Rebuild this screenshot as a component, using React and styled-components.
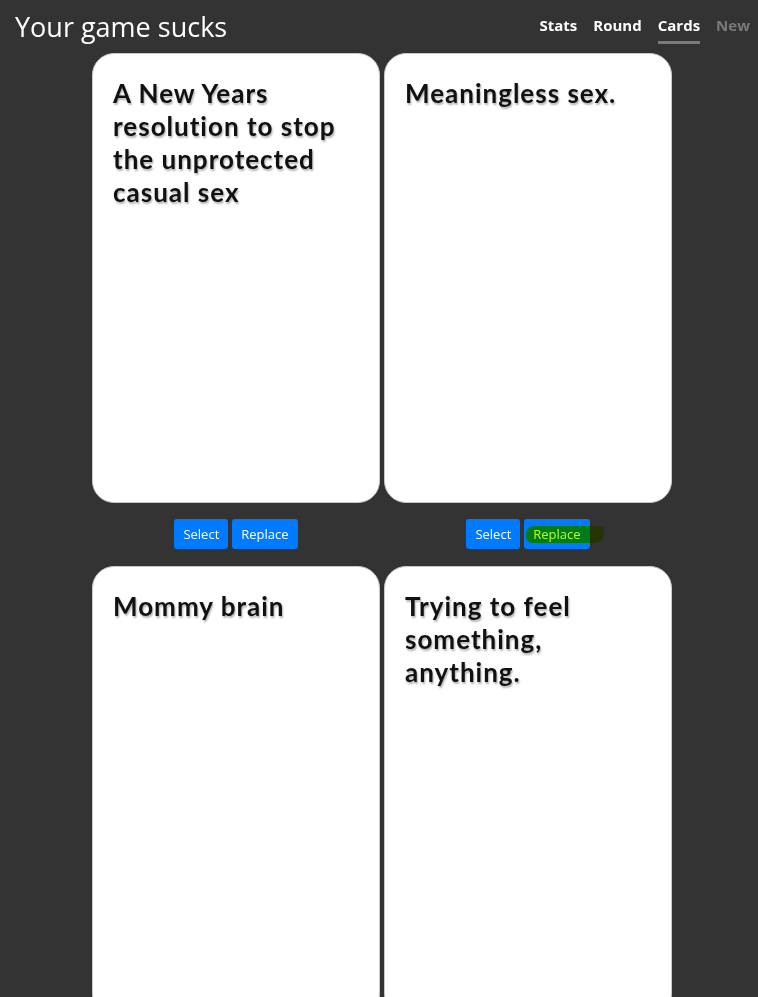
import React from "react";
import styled, { createGlobalStyle } from "styled-components";

const GlobalStyle = createGlobalStyle`
  html, body {
    margin: 0;
    padding: 0;
    background: #333333;
    overflow: hidden;
  }
  body {
    font-family: "Open Sans", "Noto Sans", sans-serif;
  }
`;

const Header = styled.header`
  display: flex;
  align-items: flex-start;
  justify-content: space-between;
  height: 53px;
  padding: 0 8px 0 15px;
`;

const Title = styled.h1`
  margin: 8px 0 0;
  font-size: 27px;
  font-weight: 400;
  color: #ffffff;
`;

const Nav = styled.nav`
  display: flex;
  gap: 16px;
  margin-top: 15px;
`;

const NavItem = styled.a`
  font-size: 15px;
  font-weight: 700;
  color: ${(p) => (p.$muted ? "#7a7a7a" : "#ffffff")};
  padding-bottom: 6px;
  border-bottom: 3px solid ${(p) => (p.$active ? "#7a7a7a" : "transparent")};
  cursor: pointer;
`;

const Board = styled.main`
  display: grid;
  grid-template-columns: repeat(2, 288px);
  column-gap: 4px;
  justify-content: center;
  padding-left: 6px;
`;

const Slot = styled.div`
  display: flex;
  flex-direction: column;
`;

const Card = styled.div`
  box-sizing: border-box;
  height: 450px;
  background: #ffffff;
  border: 1px solid #c8c8c8;
  border-radius: 22px;
  padding: 23px 20px;
`;

const CardText = styled.p`
  margin: 0;
  font-family: "Lato", "Noto Sans", sans-serif;
  font-weight: 700;
  font-size: 26px;
  line-height: 33px;
  letter-spacing: 1px;
  color: #111111;
  text-shadow: 1px 2px 2px rgba(0, 0, 0, 0.3);
`;

const Actions = styled.div`
  display: flex;
  justify-content: center;
  gap: 4px;
  padding: 16px 0 17px;
`;

const Button = styled.button`
  position: relative;
  height: 30px;
  padding: 0 9px;
  border: none;
  border-radius: 3px;
  background: #007bff;
  color: #ffffff;
  font-family: "Open Sans", "Noto Sans", sans-serif;
  font-size: 13px;
  cursor: pointer;
`;

const Marker = styled.span`
  position: absolute;
  left: 2px;
  top: 7px;
  width: 78px;
  height: 17px;
  border-radius: 8px 3px 9px 6px;
  background: #b6ff1a;
  mix-blend-mode: multiply;
  pointer-events: none;
`;

const cards = [
  { text: "A New Years resolution to stop the unprotected casual sex" },
  { text: "Meaningless sex.", marked: true },
  { text: "Mommy brain" },
  { text: "Trying to feel something, anything." },
];

export default function App() {
  return (
    <>
      <GlobalStyle />
      <Header>
        <Title>Your game sucks</Title>
        <Nav>
          <NavItem>Stats</NavItem>
          <NavItem>Round</NavItem>
          <NavItem $active>Cards</NavItem>
          <NavItem $muted>New</NavItem>
        </Nav>
      </Header>
      <Board>
        {cards.map((card, i) => (
          <Slot key={i}>
            <Card>
              <CardText>{card.text}</CardText>
            </Card>
            <Actions>
              <Button>Select</Button>
              <Button>
                Replace
                {card.marked && <Marker />}
              </Button>
            </Actions>
          </Slot>
        ))}
      </Board>
    </>
  );
}
